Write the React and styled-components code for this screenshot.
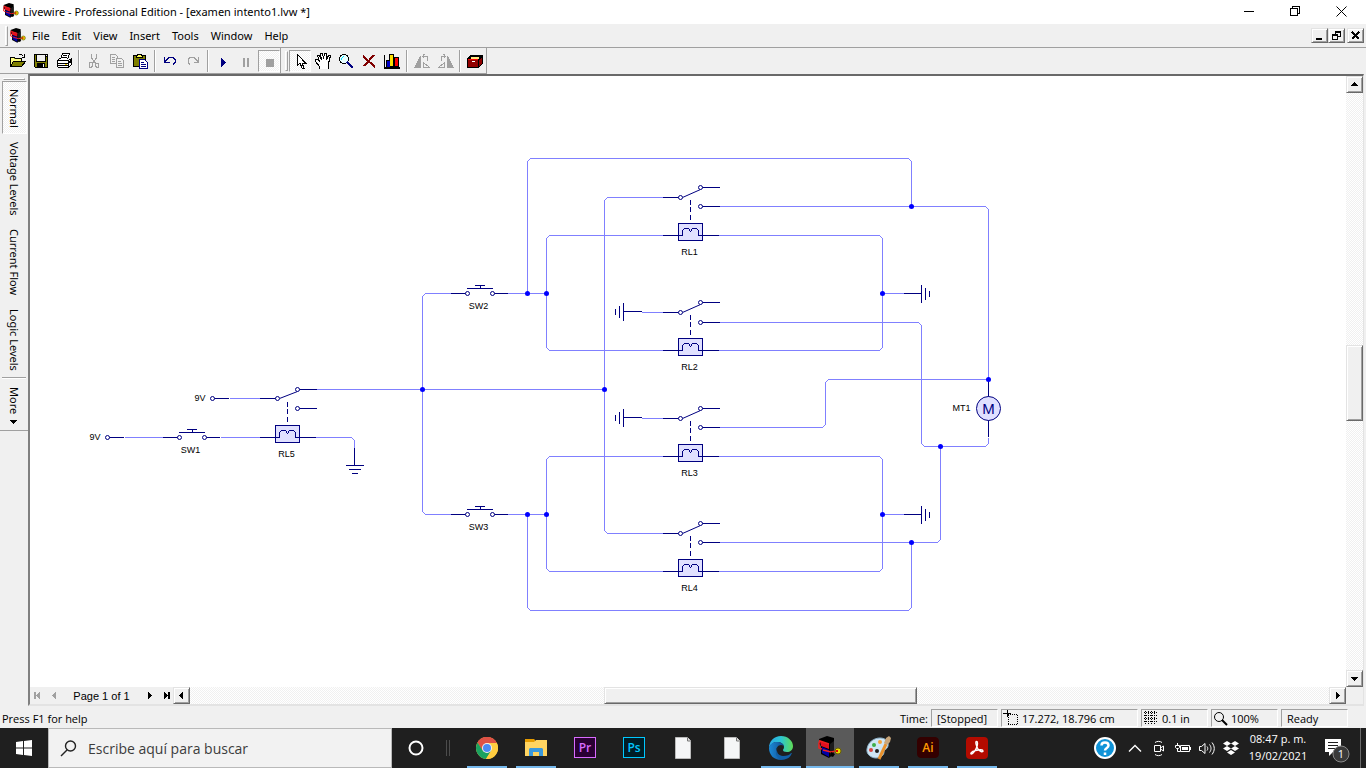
import styled, { createGlobalStyle, css } from "styled-components";

const GlobalStyle = createGlobalStyle`
  * {
    box-sizing: border-box;
  }
  body {
    margin: 0;
    overflow: hidden;
    font-family: "Open Sans", "Noto Sans", sans-serif;
    font-size: 11px;
    color: #000;
  }
  button {
    margin: 0;
    padding: 0;
    border: 0;
    background: none;
    color: inherit;
    font: inherit;
  }
`;

const dither = css`
  background: repeating-conic-gradient(#f0f0f0 0% 25%, #fff 0% 50%) 0 0 / 2px
    2px;
`;

const raised = css`
  background: #f0f0f0;
  border: 1px solid;
  border-color: #e3e3e3 #696969 #696969 #e3e3e3;
  box-shadow: inset 1px 1px #fff, inset -1px -1px #a0a0a0;
`;

const Window = styled.div`
  display: flex;
  flex-direction: column;
  height: 100vh;
  background: #f0f0f0;
`;

/* title bar */

const TitleBar = styled.header`
  display: flex;
  align-items: center;
  height: 24px;
  padding: 0 2px 2px 3px;
  background: #fff;
`;
const WindowTitle = styled.h1`
  flex: 1;
  margin: 0 0 0 4px;
  font-family: "Noto Sans", sans-serif;
  font-size: 11px;
  font-weight: 400;
  white-space: pre;
`;
const CaptionButton = styled.button`
  display: flex;
  align-items: center;
  justify-content: center;
  width: 46px;
  height: 22px;
`;

/* menu bar */

const MenuBar = styled.nav`
  display: flex;
  align-items: center;
  height: 23px;
  padding: 0 2px 0 5px;
  gap: 2px;
`;
const Grip = styled.span`
  width: 3px;
  height: 20px;
  border: 1px solid;
  border-color: #fff #a0a0a0 #a0a0a0 #fff;
`;
const MenuItems = styled.div`
  display: flex;
  align-items: center;
  flex: 1;
`;
const MenuItem = styled.button`
  height: 20px;
  padding: 0 6px;
  font-family: "Noto Sans", sans-serif;
`;
const ChildButtons = styled.div`
  display: flex;
`;
const ChildButton = styled.button`
  display: flex;
  align-items: center;
  justify-content: center;
  width: 17px;
  height: 15px;
  margin-left: ${({ $apart }) => ($apart ? "2px" : "0")};
  ${raised}
`;

/* tool bar */

const ToolBar = styled.div`
  display: flex;
  height: 27px;
  border-top: 1px solid #a0a0a0;
`;
const ToolGroup = styled.div`
  display: flex;
  align-items: center;
  padding-left: ${({ $first }) => ($first ? "7px" : "4px")};
  gap: 1px;
  border-right: 1px solid #a0a0a0;
  border-bottom: 1px solid #a0a0a0;
`;
const ToolButton = styled.button`
  display: flex;
  align-items: center;
  justify-content: center;
  width: 22px;
  height: 22px;
  ${({ $pressed }) =>
    $pressed &&
    css`
      ${dither}
      border: 1px solid;
      border-color: #a0a0a0 #fff #fff #a0a0a0;
    `}
`;
const ToolDivider = styled.span`
  width: 2px;
  height: 22px;
  margin: 0 2px;
  border-left: 1px solid #a0a0a0;
  border-right: 1px solid #fff;
`;

/* middle part */

const Body = styled.div`
  display: flex;
  flex: 1;
  min-height: 0;
`;
const ViewBar = styled.div`
  display: flex;
  flex-direction: column;
  align-items: center;
  align-self: flex-start;
  width: 28px;
  height: 357px;
  padding-top: 4px;
  border-bottom: 1px solid #a0a0a0;
`;
const ViewGrip = styled.span`
  width: 22px;
  height: 3px;
  margin-bottom: 1px;
  border: 1px solid;
  border-color: #fff #a0a0a0 #a0a0a0 #fff;
`;
const ViewButton = styled.button`
  width: 25px;
  padding: 7px 0 5px;
  text-align: left;
  line-height: 23px;
  font-family: "Noto Sans", sans-serif;
  font-size: 11px;
  writing-mode: vertical-rl;
  white-space: nowrap;
  border: 1px solid transparent;
  ${({ $pressed }) =>
    $pressed &&
    css`
      ${dither}
      border-color: #a0a0a0 #fff #fff #a0a0a0;
    `}
`;
const ViewDivider = styled.span`
  width: 24px;
  height: 2px;
  border-top: 1px solid #a0a0a0;
  border-bottom: 1px solid #fff;
`;
const Frame = styled.main`
  display: grid;
  flex: 1;
  min-width: 0;
  grid-template: minmax(0, 1fr) 17px / minmax(0, 1fr) 17px;
  margin-right: 2px;
  border: 2px solid;
  border-color: #696969 #e3e3e3 #e3e3e3 #808080;
  border-right-width: 1px;
`;
const Sheet = styled.svg`
  width: 100%;
  height: 100%;
  background: #fff;
  shape-rendering: crispEdges;
`;
const VerticalBar = styled.div`
  display: flex;
  flex-direction: column;
  ${dither}
`;
const HorizontalBar = styled.div`
  display: flex;
  ${dither}
`;
const Track = styled.div`
  display: flex;
  flex: 1;
  flex-direction: ${({ $vertical }) => ($vertical ? "column" : "row")};
`;
const TrackSpace = styled.span`
  flex: ${({ $share }) => $share};
`;
const Thumb = styled.span`
  flex: ${({ $share }) => $share};
  ${raised}
`;
const ScrollButton = styled.button`
  display: flex;
  align-items: center;
  justify-content: center;
  width: 17px;
  height: 17px;
  ${raised}
`;
const Pager = styled.div`
  display: flex;
  align-items: center;
  width: 143px;
  font-family: "Liberation Sans", Arial, sans-serif;
  background: #f0f0f0;
`;
const PagerButton = styled.button`
  display: flex;
  align-items: center;
  justify-content: center;
  width: 16px;
  height: 16px;
`;
const PagerLabel = styled.span`
  flex: 1;
  text-align: center;
`;

/* status bar */

const StatusBar = styled.footer`
  display: flex;
  align-items: flex-end;
  height: 22px;
  padding: 0 18px 1px 2px;
  gap: 3px;
  line-height: 17px;
`;
const StatusHint = styled.span`
  flex: 1;
`;
const StatusPanel = styled.span`
  display: flex;
  align-items: center;
  width: ${({ $wide }) => ($wide ? "137px" : "67px")};
  height: 18px;
  padding-left: ${({ $icon }) => ($icon ? "1px" : "5px")};
  gap: 3px;
  border: 1px solid;
  border-color: #a0a0a0 #fff #fff #a0a0a0;
  white-space: nowrap;
`;

/* task bar */

const TaskBar = styled.div`
  display: flex;
  height: 40px;
  background: #1f1f1f;
  color: #fff;
`;
const StartButton = styled.button`
  display: flex;
  align-items: center;
  justify-content: center;
  width: 48px;
`;
const SearchBox = styled.label`
  display: flex;
  align-items: center;
  width: 344px;
  padding-left: 11px;
  gap: 11px;
  background: #f2f2f2;
  border: 1px solid #b9b9b9;
`;
const SearchInput = styled.input`
  flex: 1;
  min-width: 0;
  padding: 0;
  border: 0;
  outline: 0;
  background: none;
  font: 14px "Open Sans", "Noto Sans", sans-serif;
  &::placeholder {
    color: #3c3c3c;
    opacity: 1;
  }
`;
const TaskButton = styled.button`
  display: flex;
  align-items: center;
  justify-content: center;
  width: 48px;
  height: 40px;
  background: ${({ $active }) => ($active ? "#5a5a5a" : "none")};
`;
const TaskApps = styled.div`
  display: flex;
  flex: 1;
  gap: 1px;
`;
const AppButton = styled(TaskButton)`
  background-image: ${({ $open, $active }) =>
    $open || $active ? "linear-gradient(#76b9ed, #76b9ed)" : "none"};
  background-repeat: no-repeat;
  background-position: center bottom;
  background-size: ${({ $active }) => ($active ? "48px" : "40px")} 2px;
`;
const TaskGrip = styled.span`
  align-self: center;
  width: 4px;
  height: 16px;
  margin: 0 13px 0 6px;
  border: 1px solid #4c4c4c;
  border-width: 0 1px;
`;
const Tray = styled.div`
  display: flex;
  align-items: center;
`;
const TrayButton = styled.button`
  display: flex;
  align-items: center;
  justify-content: center;
  width: ${({ $wide }) => ($wide ? "36px" : "24px")};
  height: 40px;
`;
const Clock = styled.time`
  width: 70px;
  padding-bottom: 2px;
  text-align: center;
  line-height: 17px;
`;
const NoticeButton = styled(TaskButton)`
  padding-top: 4px;
  border-right: 1px solid #6b6b6b;
`;
const ShowDesktop = styled.button`
  width: 5px;
  height: 40px;
`;

/* ---------- pixel icons ---------- */

const Icon = ({ w = 16, h = 16, children }) => (
  <svg width={w} height={h} viewBox={`0 0 ${w} ${h}`} shapeRendering="crispEdges" fill="none" aria-hidden="true">
    {children}
  </svg>
);

const AppLogo = ({ size = 16 }) => (
  <svg width={size} height={size} viewBox="0 0 24 24" fill="none" aria-hidden="true">
    <path fill="#000" d="M1 3L9 0l7 2v15l-5 5-8-4V10L1 8z" />
    <path fill="#e01020" d="M2 5l9 3v5L3 10z" />
    <path fill="#0000a8" d="M4 11l7 3v7l-7-4z" />
    <path fill="#1c1c1c" d="M12 8l4-3v12l-4 4z" />
    <path stroke="#f02020" strokeWidth="1.500" d="M2 4L1 7v5l3 1M2 5l9 3M5 14l8 2 5-1" />
    <path fill="#000" d="M13 16l4 2-2 3-3-1z" />
    <circle cx="20" cy="15" r="3" fill="#e8d800" stroke="#6a6000" />
    <path fill="#e00000" d="M18 14h2v2h-2z" />
  </svg>
);

const OpenIcon = () => (
  <Icon w={18}>
    <path fill="#808000" stroke="#000" d="M1.500 13.500v-9h4l1 1h6v3M1.500 13.500l3-5h12l-4 5z" />
    <path fill="#ffff80" d="M2 5h3v1h7v2H4L2 12z" />
    <path stroke="#000" d="M9.500 2.500c2-2 4-1 5 1M15.500 1v3h-3" />
  </Icon>
);
const SaveIcon = () => (
  <Icon>
    <path fill="#000" d="M1 1h14v14H2l-1-1z" />
    <path fill="#808000" d="M2 2h1v7h10V4h1v10h-2v-4H4v4H2z" />
    <path fill="#f0f0f0" d="M4 2h8v6H4zM10 11h1v3h-1zM13 2h1v1h-1z" />
  </Icon>
);
const PrintIcon = () => (
  <Icon w={17}>
    <path fill="#fff" stroke="#000" d="M4.500 6.500l2-6h7l-2 6M1.500 7.500l2-2M1.500 7.500h11l3-2v6l-3 3h-10l-1-1z" />
    <path stroke="#000" d="M7 2.500h4M6 4.500h5M2 10.500h10l3-3M12.500 8v6M2 12.500h10M14 9.500h2" />
    <path stroke="#ffd800" d="M9 11.500h2" />
  </Icon>
);
const CutIcon = () => (
  <Icon>
    <path stroke="#a0a0a0" d="M5.500 1v4l4 5M10.500 1v4l-4 5" />
    <path stroke="#a0a0a0" d="M4 9.500h2.500v4h-1v1h-2v-4zM9.500 10h2l1 1v3h-2l-1-1z" />
  </Icon>
);
const CopyIcon = () => (
  <Icon>
    <path stroke="#a0a0a0" d="M1.500 1.500h5l2 2v7h-7zM3 4.500h3M3 6.500h3M3 8.500h3" />
    <path fill="#f0f0f0" stroke="#a0a0a0" d="M7.500 5.500h5l2 2v7h-7zM9 8.500h3M9 10.500h4M9 12.500h4" />
  </Icon>
);
const PasteIcon = () => (
  <Icon w={17}>
    <path fill="#808000" stroke="#000" d="M1.500 2.500h12v11h-12z" />
    <path fill="#ffff60" stroke="#000" d="M4.500 3.500l1-2h4l1 2v1h-6z" />
    <path fill="#fff" stroke="#000080" d="M7.500 6.500h5l3 3v6h-8zM9 9.500h3M9 11.500h5M9 13.500h5" />
  </Icon>
);
const TurnIcon = ({ redo }) => (
  <Icon>
    <g transform={redo ? "matrix(-1 0 0 1 16 0)" : undefined} stroke={redo ? "#a0a0a0" : "#000080"}>
      <path d="M2.500 4v5h5M3 8.500l3-3 1-1h4l2 2v3l-2 2" />
    </g>
  </Icon>
);
const PlayIcon = () => (
  <Icon>
    <path fill="#000080" d="M6 5h1v1h1v1h1v1h1v1h1v1h-1v1H9v1H8v1H7v1H6z" />
  </Icon>
);
const PauseIcon = () => (
  <Icon>
    <path fill="#a0a0a0" d="M5 5h2v9H5zM9 5h2v9H9z" />
  </Icon>
);
const StopIcon = () => (
  <Icon>
    <path fill="#a0a0a0" d="M5 6h8v8H5z" />
  </Icon>
);
const PointerIcon = () => (
  <Icon>
    <path fill="#fff" stroke="#000" d="M5.500 1.500v11l2.500-2.500 2 5h2l-2-5h3.500z" />
  </Icon>
);
const HandIcon = () => (
  <Icon w={17} h={17}>
    <path
      fill="#fff"
      stroke="#000"
      d="M4.500 16.500v-2l-4-5v-2h2l2 2-2-6h2l2 4-1-6h2l1 5 1-5h2v6l2-4h1.500v2l-1.500 6v5"
    />
  </Icon>
);
const GlassIcon = () => (
  <Icon>
    <circle cx="6" cy="6" r="4.500" fill="#e8ffff" stroke="#000" />
    <path stroke="#00e0ff" d="M3 6.500v-1l3-2" />
    <path stroke="#000080" strokeWidth="2" d="M9 9l6 6" />
  </Icon>
);
const DeleteIcon = () => (
  <Icon>
    <path stroke="#800000" strokeWidth="2" d="M2 3l12 11M13 2L3 13" />
  </Icon>
);
const ChartIcon = () => (
  <Icon>
    <path fill="#000" d="M0 2h1v12h15v2H0zM2 7h3V1h4l1 1v2h5v10H2z" />
    <path fill="#0000c8" d="M3 8h3v6H3z" />
    <path fill="#ffe000" d="M6 2h3v11H6z" />
    <path fill="#f00" d="M11 5h3v8h-3z" />
  </Icon>
);
const RotateIcon = ({ flip }) => (
  <Icon w={17}>
    <g transform={flip ? "matrix(-1 0 0 1 17 0)" : undefined}>
      <path fill="#a0a0a0" d="M6 3h1v12H0v-1h1v-2h1v-2h1V8h1V6h1V4h1z" />
      <path stroke="#a0a0a0" d="M9.500 9.500l6 5h-6zM9 3.500h4v4M10.500 1l-2 2.500 2 2" />
    </g>
  </Icon>
);
const BoxIcon = () => (
  <Icon>
    <path fill="#000" d="M0 5l4-3h12v8l-4 5H0z" />
    <path fill="#900000" d="M1 6h10v8H1zM12 7l3-3v6l-3 3z" />
    <path fill="#ffe680" d="M4 4h8v2H4z" />
    <path fill="#f00" d="M1 6h10v1H1z" />
    <path fill="#fff" d="M5 8h3v1H5z" />
  </Icon>
);

const Arrow = ({ dir, color = "#000", bar }) => {
  const turn = { right: 0, down: 90, left: 180, up: 270 }[dir];
  return (
    <Icon w={9} h={9}>
      <g transform={`rotate(${turn} 4.500 4.500)`} fill={color}>
        <path d="M3 1h1v1h1v1h1v1h1v1H6v1H5v1H4v1H3z" />
        {bar && <path d="M7 1h2v7H7z" />}
      </g>
    </Icon>
  );
};

const TOOLS = [
  [
    ["Open", OpenIcon],
    ["Save", SaveIcon],
    ["Print", PrintIcon],
    null,
    ["Cut", CutIcon],
    ["Copy", CopyIcon],
    ["Paste", PasteIcon],
    null,
    ["Undo", TurnIcon],
    ["Redo", () => <TurnIcon redo />],
    null,
    ["Run", PlayIcon],
    ["Pause", PauseIcon],
    ["Stop", StopIcon, true],
  ],
  [
    ["Select", PointerIcon, true],
    ["Pan", HandIcon],
    ["Zoom", GlassIcon],
    ["Delete", DeleteIcon],
    ["Graph", ChartIcon],
    null,
    ["Rotate left", RotateIcon],
    ["Rotate right", () => <RotateIcon flip />],
    null,
    ["Gallery", BoxIcon],
  ],
];

/* ---------- circuit ---------- */

const NAVY = "#000080";
const WIRE = "#8080ff";

const Label = styled.text`
  font-family: "Liberation Sans", Arial, sans-serif;
  font-size: ${({ $big }) => ($big ? "15px" : "9px")};
  fill: ${({ $big }) => ($big ? "#000080" : "#000")};
  text-anchor: ${({ $end }) => ($end ? "end" : "middle")};
`;

const WIRES = [
  "M124 437H163M220 437H259M229 398H260M315 437H351l3 3V447",
  "M315 389H604",
  "M451 293H425l-3 3V511l3 3H451",
  "M507 293H546M507 514H546",
  "M527 293V161l3-3H908l3 3V206",
  "M663 235H549l-3 3V347l3 3H663",
  "M663 456H549l-3 3V568l3 3H663",
  "M663 197H607l-3 3V530l3 3H663",
  "M718 206H985l3 3V379",
  "M718 235H879l3 3V347l-3 3H718",
  "M718 456H879l3 3V568l-3 3H718",
  "M882 293H903M882 514H903M641 312H663M641 418H663",
  "M718 322H918l3 3V443l3 3H985l3-3V437",
  "M718 427H822l3-3V382l3-3H988",
  "M718 542H937l3-3V446",
  "M527 514V607l3 3H908l3-3V542",
];

const NODES = [
  [911, 206],
  [527, 293],
  [546, 293],
  [882, 293],
  [988, 379],
  [422, 389],
  [604, 389],
  [940, 446],
  [527, 514],
  [546, 514],
  [882, 514],
  [911, 542],
];

const RELAYS = [
  { name: "RL1", x: 680, y: 197, top: 187, low: 206, coil: 235 },
  { name: "RL2", x: 680, y: 312, top: 302, low: 322, coil: 350 },
  { name: "RL3", x: 680, y: 418, top: 408, low: 427, coil: 456 },
  { name: "RL4", x: 680, y: 533, top: 523, low: 542, coil: 571 },
  { name: "RL5", x: 277, y: 398, top: 389, low: 408, coil: 437 },
];

const SWITCHES = [
  { name: "SW1", x: 179, y: 437 },
  { name: "SW2", x: 467, y: 293 },
  { name: "SW3", x: 467, y: 514 },
];

const GROUNDS = [
  { x: 903, y: 293, turn: 0 },
  { x: 903, y: 514, turn: 0 },
  { x: 641, y: 311, turn: 180 },
  { x: 641, y: 417, turn: 180 },
  { x: 354, y: 447, turn: 90 },
];

const SUPPLIES = [
  { x: 212, y: 398 },
  { x: 107, y: 437 },
];

const Pin = ({ x, y }) => (
  <circle cx={x} cy={y} r="2" fill="#fff" stroke={NAVY} shapeRendering="auto" />
);

const Relay = ({ name, x, y, top, low, coil }) => (
  <g stroke={NAVY} fill="none">
    <path d={`M${x - 18} ${y}H${x}M${x + 20} ${top}h19M${x + 20} ${low}h19`} />
    <path d={`M${x + 2} ${y}L${x + 20} ${top + 2}`} shapeRendering="auto" />
    <path d={`M${x + 10} ${coil - 36}v5m0 2v5m0 3v5`} />
    <path d={`M${x - 18} ${coil}h16M${x + 22} ${coil}h16`} />
    <rect x={x - 2} y={coil - 12} width="24" height="17" fill="#e0e0ff" />
    <path d={`M${x - 2} ${coil}h4v-5l2-2h4l2 3 2-3h4l2 2v5h4`} />
    <Pin x={x} y={y} />
    <Pin x={x + 20} y={top} />
    <Pin x={x + 20} y={low} />
    <Label x={x + 9} y={coil + 19} stroke="none">
      {name}
    </Label>
  </g>
);

const Switch = ({ name, x, y }) => (
  <g stroke={NAVY} fill="none">
    <path d={`M${x - 17} ${y}h17M${x + 25} ${y}h15`} />
    <path d={`M${x - 1} ${y - 5}h26M${x + 7} ${y - 8}h10M${x + 13} ${y - 8}v3`} />
    <Pin x={x} y={y} />
    <Pin x={x + 25} y={y} />
    <Label x={x + 11} y={y + 15} stroke="none">
      {name}
    </Label>
  </g>
);

const Circuit = () => (
  <Sheet role="img" aria-label="Circuit diagram">
    <g transform="translate(-29.500 -75.500)">
      <path d={WIRES.join("")} fill="none" stroke={WIRE} />
      {GROUNDS.map(({ x, y, turn }) => (
        <path
          key={`${x}-${y}`}
          transform={`translate(${x} ${y}) rotate(${turn})`}
          d="M0 0H18M18-9V9M22-6V6M26-3V3"
          stroke={NAVY}
        />
      ))}
      {SUPPLIES.map(({ x, y }) => (
        <g key={y}>
          <path d={`M${x} ${y}h16`} stroke={NAVY} />
          <Pin x={x} y={y} />
          <Label x={x - 7} y={y + 2} $end>
            9V
          </Label>
        </g>
      ))}
      {SWITCHES.map((item) => (
        <Switch key={item.name} {...item} />
      ))}
      {RELAYS.map((item) => (
        <Relay key={item.name} {...item} />
      ))}
      <path d="M988 379V436" stroke={NAVY} />
      <circle cx="988" cy="408" r="12" fill="#e0e0ff" stroke={NAVY} shapeRendering="auto" />
      <Label x="988" y="413" $big>
        M
      </Label>
      <Label x="970" y="410" $end>
        MT1
      </Label>
      {NODES.map(([x, y]) => (
        <circle key={`${x}-${y}`} cx={x} cy={y} r="2.500" fill="#00f" shapeRendering="auto" />
      ))}
    </g>
  </Sheet>
);

/* ---------- task bar icons ---------- */

const ChromeIcon = () => (
  <svg width="22" height="22" viewBox="0 0 22 22" aria-hidden="true">
    <circle cx="11" cy="11" r="11" fill="#ffcd40" />
    <path fill="#de5246" d="M11 11L1.500 5.500a11 11 0 0 1 19 0z" />
    <path fill="#de5246" d="M11 6h9.700a11 11 0 0 0-19.200-.500L6.500 14z" />
    <path fill="#1aa260" d="M1.500 5.500A11 11 0 0 0 10 22l5.300-8.500L6.700 13.500z" />
    <path fill="#ffcd40" d="M11 6h9.800A11 11 0 0 1 10 22l5.300-8.500z" />
    <circle cx="11" cy="11" r="5" fill="#f1f1f1" />
    <circle cx="11" cy="11" r="4" fill="#4a8af4" />
  </svg>
);
const FolderIcon = () => (
  <svg width="22" height="20" viewBox="0 0 22 20" aria-hidden="true">
    <path fill="#e69c00" d="M0 1h9l1 1v3H0z" />
    <path fill="#ffd461" d="M0 4h9l2-2h11v16H0z" />
    <path fill="#3b99dc" d="M4 18v-7l1-1h12l1 1v7h-4v-4H8v4z" />
  </svg>
);
const DocIcon = () => (
  <svg width="16" height="22" viewBox="0 0 16 22" aria-hidden="true">
    <path fill="#f5f6f7" stroke="#bbb" d="M.500.500h12l3 3v18H.500z" />
    <path fill="#ddd" stroke="#777" d="M12.500.500v3.500h3" />
  </svg>
);
const EdgeIcon = () => (
  <svg width="24" height="24" viewBox="0 0 24 24" aria-hidden="true">
    <defs>
      <linearGradient id="edgeTop">
        <stop offset="0" stopColor="#2aa8e8" />
        <stop offset="0.500" stopColor="#2cc5d2" />
        <stop offset="1" stopColor="#5fdc55" />
      </linearGradient>
      <linearGradient id="edgeLow">
        <stop offset="0" stopColor="#1b8ad8" />
        <stop offset="1" stopColor="#114a8b" />
      </linearGradient>
    </defs>
    <path fill="url(#edgeTop)" d="M0 12C0 5 5 0 12 0c7 0 12 5 12 10 0 4-3 6-6 6-3 0-4-1-4-2s1-1 1-3c0-3-3-5-7-5-4 0-7 3-8 6z" />
    <path fill="url(#edgeLow)" d="M0 12c1-4 4-6 8-6 4 0 7 2 7 5 0-1-1-2-3-2-3 0-5 3-5 6 0 5 5 8 9 8-1 .500-3 1-4 1C5 24 0 19 0 12z" />
    <path fill="#1160a8" d="M9 11c-3 5 1 9 5 9 4 0 7-1 8-3 1 0 1 0 .500 1-1 3-4 5-7 5.500C9 24 4 18 9 11z" />
  </svg>
);
const PaintIcon = () => (
  <svg width="26" height="24" viewBox="0 0 26 24" aria-hidden="true">
    <path fill="#cfe6f5" stroke="#8fb4cc" d="M1 13C2 6 8 2 14 2s9 4 8 8-4 3-4 6-3 6-8 6-10-4-9-9z" />
    <circle cx="5" cy="14" r="2" fill="#d9453d" />
    <circle cx="8" cy="9" r="2" fill="#3fae49" />
    <circle cx="14" cy="6" r="2" fill="#f2a33a" />
    <circle cx="11" cy="15" r="2" fill="#1f1f1f" />
    <path stroke="#e8912d" strokeWidth="3" d="M20 8l-7 15" />
    <path fill="#c8a57a" d="M18 7l2-5 3-2 2 2-1 4-3 3z" />
  </svg>
);
const AcrobatIcon = () => (
  <svg width="22" height="22" viewBox="0 0 22 22" fill="none" aria-hidden="true">
    <rect width="22" height="22" rx="4" fill="#b30b00" />
    <path
      stroke="#fff"
      strokeWidth="1.400"
      strokeLinejoin="round"
      d="M10.500 4.500c1.500 0 1 3 .500 5-1 3-4 7.500-5.500 7.500s-.500-2.500 4-3.500 7.500-1 7.500.500-3.500.500-5-2c-1.500-2.500-3-7.500-1.500-7.500z"
    />
  </svg>
);

const Badge = styled.span`
  display: flex;
  align-items: center;
  justify-content: center;
  width: 22px;
  height: 21px;
  margin-bottom: 2px;
  font: 600 12px "Open Sans", sans-serif;
  color: ${({ $ink }) => $ink};
  background: ${({ $fill }) => $fill};
  border: 1px solid ${({ $edge }) => $edge};
  border-radius: ${({ $round }) => ($round ? "4px" : "0")};
`;

const APPS = [
  { name: "Chrome", icon: <ChromeIcon />, open: true },
  { name: "Explorer", icon: <FolderIcon />, open: true },
  {
    name: "Premiere",
    icon: (
      <Badge $ink="#d86bff" $fill="#2a0034" $edge="#d86bff">
        Pr
      </Badge>
    ),
  },
  {
    name: "Photoshop",
    icon: (
      <Badge $ink="#00c8ff" $fill="#001d26" $edge="#00c8ff">
        Ps
      </Badge>
    ),
  },
  { name: "Document 1", icon: <DocIcon /> },
  { name: "Document 2", icon: <DocIcon /> },
  { name: "Edge", icon: <EdgeIcon />, open: true },
  { name: "Livewire", icon: <AppLogo size={24} />, active: true },
  { name: "Paint", icon: <PaintIcon />, open: true },
  {
    name: "Illustrator",
    icon: (
      <Badge $ink="#ff9a00" $fill="#330000" $edge="#330000" $round>
        Ai
      </Badge>
    ),
    open: true,
  },
  { name: "Acrobat", icon: <AcrobatIcon />, open: true },
];

const HelpIcon = () => (
  <svg width="24" height="24" viewBox="0 0 24 24" fill="none" aria-hidden="true">
    <circle cx="12" cy="12" r="10" fill="#0f93d8" stroke="#fff" strokeWidth="2" />
    <path stroke="#fff" strokeWidth="2.500" d="M8.500 9.500c0-4 7-4 7 0 0 2.500-3.500 2.500-3.500 5M12 16.500v2.500" />
  </svg>
);
const TRAY = [
  {
    name: "Show hidden icons",
    icon: <path strokeWidth="1.400" d="M2 11.500l6-6 6 6" />,
  },
  {
    name: "Meet now",
    icon: <path d="M3.500 5.500h6v6h-6zM9.500 8l3-2v5l-3-2M4 2.500c2-1.500 5-1.500 7 0M4 14.500c2 1.500 5 1.500 7 0" />,
  },
  {
    name: "Battery",
    icon: (
      <>
        <path d="M5.500 5.500h9v6h-9zM15.500 7v3M2.500 3v2M.500 5.500h4v2l-1 1h-2l-1-1zM2.500 9v2.500h3" />
        <path fill="#fff" stroke="none" d="M7 7h6v3H7z" />
      </>
    ),
  },
  {
    name: "Volume",
    icon: <path d="M.500 6.500h2l3.500-3v10l-3.500-3h-2zM8 6.500c1 1 1 3 0 4M10.500 4.500c2 2.500 2 5.500 0 8M13 2.500c3 4 3 8 0 12" />,
  },
  {
    name: "Dropbox",
    icon: (
      <path
        fill="#fff"
        stroke="none"
        d="M4 1l4 2.500L4 6 0 3.500zM12 1l4 2.500L12 6 8 3.500zM4 6l4 2.500L4 11 0 8.500zM12 6l4 2.500-4 2.500-4-2.500zM8 10l4 2.500L8 15l-4-2.500z"
      />
    ),
  },
];

const VIEWS = ["Normal", "Voltage Levels", "Current Flow", "Logic Levels"];
const MENUS = ["File", "Edit", "View", "Insert", "Tools", "Window", "Help"];

export default function App() {
  return (
    <Window>
      <GlobalStyle />
      <TitleBar>
        <AppLogo />
        <WindowTitle>Livewire - Professional Edition - [examen intento1.lvw *]</WindowTitle>
        <CaptionButton aria-label="Minimize">
          <Icon w={11} h={11}>
            <path stroke="#000" d="M0 5.500h10" />
          </Icon>
        </CaptionButton>
        <CaptionButton aria-label="Restore">
          <Icon w={11} h={11}>
            <path stroke="#000" d="M.500 2.500h7v7h-7zM2.500 2V.500h7v7H8" />
          </Icon>
        </CaptionButton>
        <CaptionButton aria-label="Close">
          <svg width="11" height="11" viewBox="0 0 11 11">
            <path stroke="#000" d="M.500.500l10 10M10.500.500l-10 10" />
          </svg>
        </CaptionButton>
      </TitleBar>

      <MenuBar>
        <Grip />
        <MenuItems>
          <AppLogo />
          {MENUS.map((menu) => (
            <MenuItem key={menu}>{menu}</MenuItem>
          ))}
        </MenuItems>
        <ChildButtons>
          <ChildButton aria-label="Minimize document">
            <Icon w={9} h={9}>
              <path fill="#000" d="M1 7h6v2H1z" />
            </Icon>
          </ChildButton>
          <ChildButton aria-label="Restore document">
            <Icon w={9} h={9}>
              <path stroke="#000" d="M.500 4v4.500h5V4M3 3V1h5.500v4.500H6" />
              <path fill="#000" d="M0 3h6v2H0zM3 0h6v2H3z" />
            </Icon>
          </ChildButton>
          <ChildButton aria-label="Close document" $apart>
            <Icon w={9} h={9}>
              <path stroke="#000" strokeWidth="2" d="M1 1l7 7M8 1L1 8" />
            </Icon>
          </ChildButton>
        </ChildButtons>
      </MenuBar>

      <ToolBar>
        {TOOLS.map((group, g) => (
          <ToolGroup key={g} $first={g === 0}>
            {g > 0 && <Grip />}
            {group.map((tool, i) => {
              if (!tool) return <ToolDivider key={i} />;
              const [name, Glyph, pressed] = tool;
              return (
                <ToolButton key={name} aria-label={name} $pressed={pressed}>
                  <Glyph />
                </ToolButton>
              );
            })}
          </ToolGroup>
        ))}
      </ToolBar>

      <Body>
        <ViewBar>
          <ViewGrip />
          {VIEWS.map((view, i) => (
            <ViewButton key={view} $pressed={i === 0}>
              {view}
            </ViewButton>
          ))}
          <ViewDivider />
          <ViewButton>
            More <Arrow dir="down" />
          </ViewButton>
        </ViewBar>
        <Frame>
          <Circuit />
          <VerticalBar>
            <ScrollButton aria-label="Scroll up">
              <Arrow dir="up" />
            </ScrollButton>
            <Track $vertical>
              <TrackSpace $share={253} />
              <Thumb $share={74} />
              <TrackSpace $share={250} />
            </Track>
            <ScrollButton aria-label="Scroll down">
              <Arrow dir="down" />
            </ScrollButton>
          </VerticalBar>
          <HorizontalBar>
            <Pager>
              <PagerButton aria-label="First page">
                <Arrow dir="left" color="#a0a0a0" bar />
              </PagerButton>
              <PagerButton aria-label="Previous page">
                <Arrow dir="left" color="#a0a0a0" />
              </PagerButton>
              <PagerLabel>Page 1 of 1</PagerLabel>
              <PagerButton aria-label="Next page">
                <Arrow dir="right" />
              </PagerButton>
              <PagerButton aria-label="Last page">
                <Arrow dir="right" bar />
              </PagerButton>
            </Pager>
            <ScrollButton aria-label="Scroll left">
              <Arrow dir="left" />
            </ScrollButton>
            <Track>
              <TrackSpace $share={415} />
              <Thumb $share={311} />
              <TrackSpace $share={413} />
            </Track>
            <ScrollButton aria-label="Scroll right">
              <Arrow dir="right" />
            </ScrollButton>
          </HorizontalBar>
        </Frame>
      </Body>

      <StatusBar>
        <StatusHint>Press F1 for help</StatusHint>
        <span>Time:</span>
        <StatusPanel>[Stopped]</StatusPanel>
        <StatusPanel $wide $icon>
          <Icon>
            <path stroke="#000" d="M0 3.500h8M4.500 0v7" />
            <path stroke="#000" strokeDasharray="1 1" d="M5 4.500h10M5 14.500h10M5.500 5v10M14.500 5v10" />
          </Icon>
          17.272, 18.796 cm
        </StatusPanel>
        <StatusPanel $icon>
          <Icon>
            <path
              stroke="#000"
              strokeDasharray="1 1"
              d="M1 2.500h13M1 5.500h13M1 8.500h13M1 11.500h13M2.500 1v13M5.500 1v13M8.500 1v13M11.500 1v13"
            />
          </Icon>
          0.1 in
        </StatusPanel>
        <StatusPanel $icon>
          <svg width="15" height="15" viewBox="0 0 15 15" fill="none" stroke="#000">
            <circle cx="6" cy="6" r="4.500" />
            <path strokeWidth="2" d="M9 9l5 5" />
          </svg>
          100%
        </StatusPanel>
        <StatusPanel>Ready</StatusPanel>
      </StatusBar>

      <TaskBar>
        <StartButton aria-label="Start">
          <svg width="16" height="16" viewBox="0 0 16 16" fill="#fff">
            <path d="M0 2l7-1v6.500H0zM8 1l8-1v7.500H8zM0 8.500h7V15l-7-1zM8 8.500h8V16l-8-1z" />
          </svg>
        </StartButton>
        <SearchBox>
          <svg width="17" height="17" viewBox="0 0 17 17" fill="none" stroke="#222" strokeWidth="1.400">
            <circle cx="10.500" cy="6" r="5" />
            <path d="M7 10L1 16" />
          </svg>
          <SearchInput type="text" aria-label="Search" placeholder="Escribe aquí para buscar" />
        </SearchBox>
        <TaskButton aria-label="Cortana">
          <svg width="16" height="16" viewBox="0 0 16 16">
            <circle cx="8" cy="8" r="6.500" fill="none" stroke="#fff" strokeWidth="2" />
          </svg>
        </TaskButton>
        <TaskGrip />
        <TaskApps>
          {APPS.map(({ name, icon, open, active }) => (
            <AppButton key={name} aria-label={name} $open={open} $active={active}>
              {icon}
            </AppButton>
          ))}
        </TaskApps>
        <Tray>
          <TrayButton aria-label="Help" $wide>
            <HelpIcon />
          </TrayButton>
          {TRAY.map(({ name, icon }) => (
            <TrayButton key={name} aria-label={name}>
              <svg width="16" height="17" viewBox="0 0 16 17" fill="none" stroke="#fff">
                {icon}
              </svg>
            </TrayButton>
          ))}
          <Clock>
            08:47 p. m.
            <br />
            19/02/2021
          </Clock>
          <NoticeButton aria-label="Notifications">
            <svg width="26" height="26" viewBox="0 0 26 26">
              <path fill="#fff" d="M1 2h16v13H9l-4 4v-4H1z" />
              <path stroke="#1f1f1f" d="M4 5.500h10M4 8.500h10M4 11.500h7" />
              <circle cx="17" cy="17" r="8" fill="#3a3a3a" stroke="#8a8a8a" />
              <text x="17" y="21" fill="#fff" fontSize="11" textAnchor="middle">
                1
              </text>
            </svg>
          </NoticeButton>
          <ShowDesktop aria-label="Show desktop" />
        </Tray>
      </TaskBar>
    </Window>
  );
}
